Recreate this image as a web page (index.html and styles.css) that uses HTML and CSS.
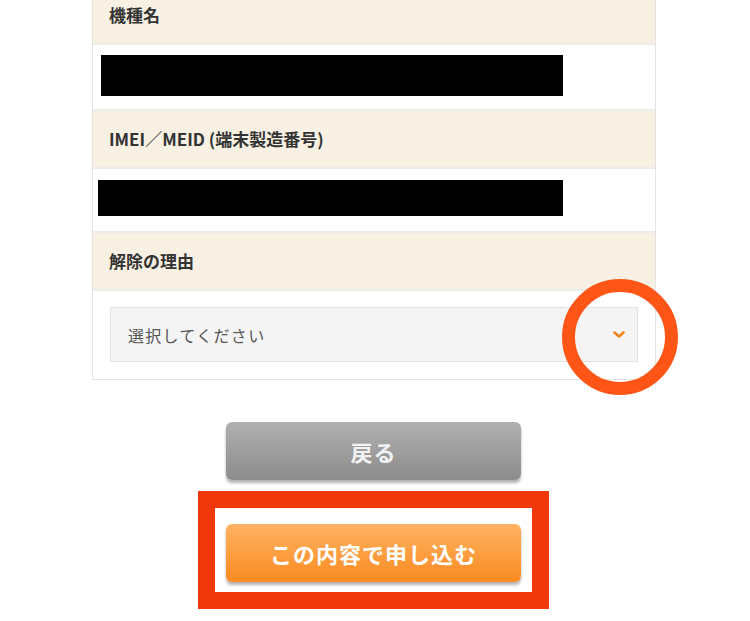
FILE: index.html
```html
<!DOCTYPE html>
<html lang="ja">
<head>
  <title>解除の申し込み</title>
  <meta name="viewport" content="width=device-width, initial-scale=1">
  <meta charset="UTF-8">
  <link rel="stylesheet" href="styles.css">
</head>
<body>
  <div class="form-table">
    <div class="form-head">機種名</div>
    <div class="form-cell">
      <div class="masked masked-model"></div>
    </div>

    <div class="form-head">IMEI／MEID (端末製造番号)</div>
    <div class="form-cell form-cell-imei">
      <div class="masked masked-imei"></div>
    </div>

    <div class="form-head">解除の理由</div>
    <div class="form-cell form-cell-select">
      <div class="select-box">
        <span>選択してください</span>
        <svg class="select-arrow" width="12" height="8" viewBox="0 0 12 8">
          <polyline points="1.5,1.5 6,5.5 10.5,1.5" fill="none" stroke="#f0861e" stroke-width="2.6" stroke-linecap="round" stroke-linejoin="round"/>
        </svg>
        <div class="mark-circle"></div>
      </div>
    </div>
  </div>

  <div class="buttons">
    <div class="btn btn-back">戻る</div>
    <div class="mark-box">
      <div class="btn btn-submit">この内容で申し込む</div>
    </div>
  </div>
</body>
</html>
```

FILE: styles.css
```css
body {
  font-family: "Noto Sans CJK JP", "Noto Sans", sans-serif;
  margin: 0;
  padding: 0;
  background: #fff;
  color: #333;
}
.form-table {
  width: 562px;
  margin: -13px 0 0 92px;
  border: 1px solid #e4e4e4;
  border-top: none;
}
.form-head {
  background: #f7f0e3;
  height: 56px;
  line-height: 56px;
  padding-left: 16px;
  font-size: 17px;
  font-weight: bold;
  color: #333;
  border-bottom: 2px solid #ececec;
}
.form-cell {
  background: #fff;
  height: 66px;
  padding: 10px 0 0 8px;
  box-sizing: border-box;
  border-bottom: 2px solid #ececec;
}
.form-cell-imei {
  height: 64px;
  padding: 11px 0 0 5px;
}
.form-cell-select {
  height: 88px;
  padding: 16px 17px 0 17px;
  border-bottom: none;
}
.masked {
  background: #000;
  width: 462px;
  height: 41px;
}
.masked-imei {
  width: 465px;
  height: 36px;
}
.select-box {
  position: relative;
  display: flex;
  align-items: center;
  justify-content: space-between;
  height: 53px;
  padding: 0 12px 0 17px;
  background: #f4f4f4;
  border: 1px solid #e2e2e2;
  font-size: 16px;
  letter-spacing: 1.3px;
  color: #555;
}
.mark-circle {
  position: absolute;
  right: -41px;
  top: -29px;
  width: 90px;
  height: 90px;
  border: 13px solid #ff5516;
  border-radius: 50%;
}
.buttons {
  display: flex;
  flex-direction: column;
  align-items: center;
  margin-top: 42px;
  padding-right: 3px;
}
.btn {
  width: 295px;
  height: 58px;
  border-radius: 6px;
  display: flex;
  align-items: center;
  justify-content: center;
  font-size: 22px;
  font-weight: bold;
  color: #fff;
  letter-spacing: 1px;
  box-shadow: 0 3px 3px rgba(0,0,0,0.3);
}
.btn-back {
  background: linear-gradient(#b0b0b0, #8c8c8c);
  color: #f2f2f2;
}
.mark-box {
  margin-top: 11px;
  border: 17px solid #f0380a;
  padding: 16px 11px 10px 11px;
}
.btn-submit {
  background: linear-gradient(#ffb363, #f98a1f);
}
```
